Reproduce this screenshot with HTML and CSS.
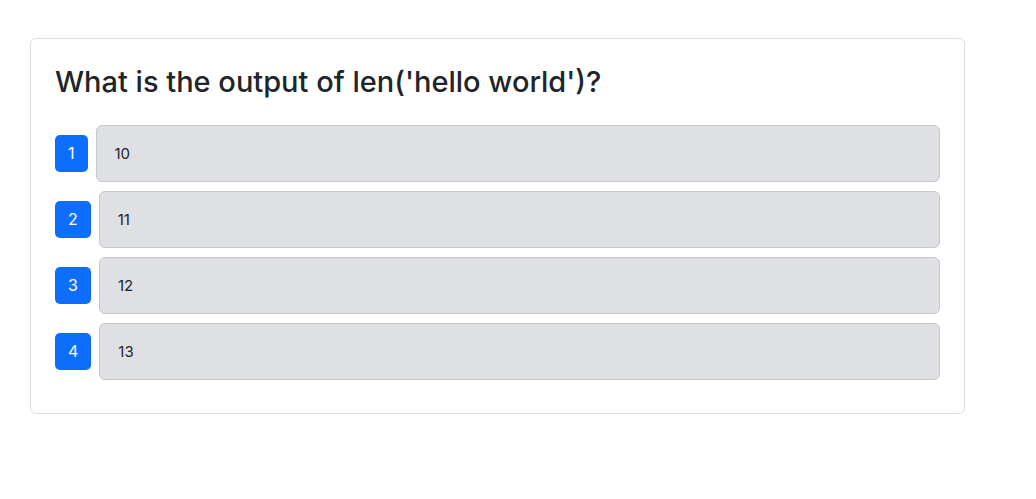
FILE: index.html
```html
<!DOCTYPE html>
<html lang="en">
<head>
<meta charset="utf-8">
<title>Quiz</title>
<link rel="stylesheet" href="styles.css">
</head>
<body>
<div class="card">
  <h3 class="question">What is the output of len('hello world')?</h3>
  <div class="options">
    <div class="option"><span class="badge">1</span><div class="answer">10</div></div>
    <div class="option"><span class="badge">2</span><div class="answer">11</div></div>
    <div class="option"><span class="badge">3</span><div class="answer">12</div></div>
    <div class="option"><span class="badge">4</span><div class="answer">13</div></div>
  </div>
</div>
</body>
</html>
```
FILE: styles.css
```css
* { box-sizing: border-box; }
body {
  margin: 0;
  background: #ffffff;
  font-family: Inter, "Liberation Sans", Arial, sans-serif;
  color: #212529;
}
.card {
  margin: 38px 0 0 30px;
  width: 935px;
  border: 1px solid #dcdfe2;
  border-radius: 6px;
  padding: 26px 24px 24px 24px;
}
.question {
  margin: 0 0 25px 0;
  font-size: 29px;
  font-weight: 500;
  line-height: 1.2;
}
.options {
  display: flex;
  flex-direction: column;
  gap: 9px;
}
.option {
  display: flex;
  align-items: center;
  gap: 8px;
}
.badge {
  background: #0d6efd;
  color: #fff;
  font-size: 16px;
  line-height: 21px;
  padding: 8px 13px;
  border-radius: 5px;
}
.answer {
  flex: 1;
  background: #dfe0e3;
  border: 1px solid #c6c8cb;
  border-radius: 6px;
  padding: 17px 18px 16px 18px;
  font-size: 15px;
  line-height: 22px;
}
.option:last-child { margin-bottom: 9px; }
```
